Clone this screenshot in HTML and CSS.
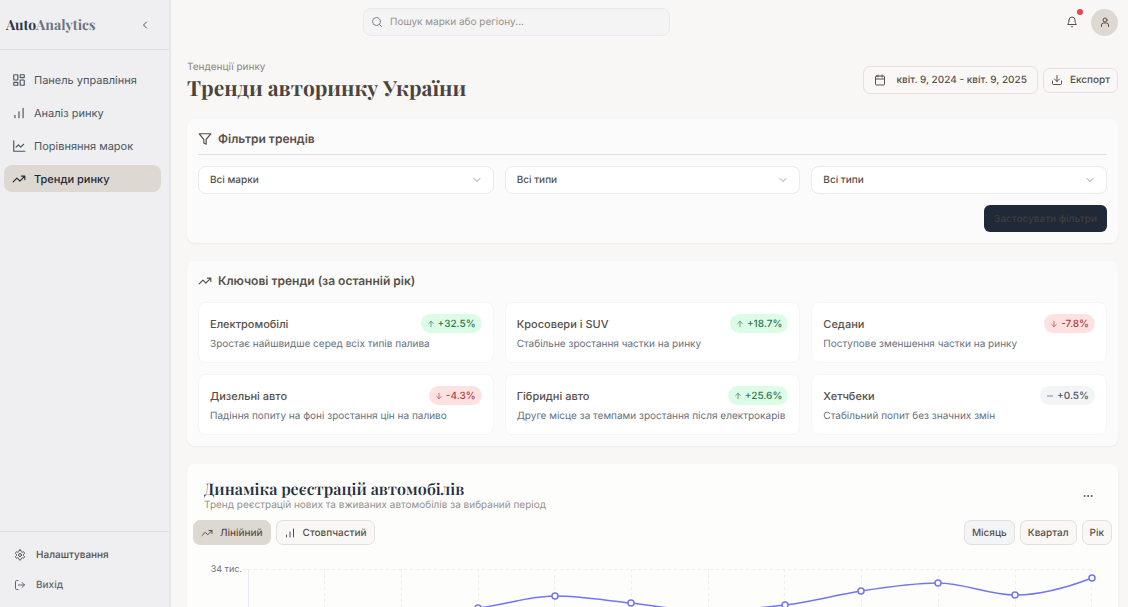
FILE: index.html
```html
<!DOCTYPE html>
<html lang="uk">
<head>
<meta charset="utf-8">
<meta name="viewport" content="width=device-width, initial-scale=1">
<title>AutoAnalytics</title>
<link rel="stylesheet" href="styles.css">
</head>
<body>
<svg class="sprite" aria-hidden="true">
  <symbol id="trend" viewBox="0 0 24 24"><path d="M2 17l6.500-6.500 5 5L22 7M16 7h6v6"/></symbol>
  <symbol id="bars" viewBox="0 0 24 24"><path d="M5 20v-4M12 20V10M19 20V4"/></symbol>
  <symbol id="chevron" viewBox="0 0 24 24"><path d="M6 9l6 6 6-6"/></symbol>
  <symbol id="up" viewBox="0 0 24 24"><path d="M12 20V4M5 11l7-7 7 7"/></symbol>
  <symbol id="down" viewBox="0 0 24 24"><path d="M12 4v16M5 13l7 7 7-7"/></symbol>
</svg>
<div class="app">
  <aside class="sidebar">
    <div class="brand">
      <a class="logo" href="#">Auto<span>Analytics</span></a>
      <button class="plain" aria-label="Згорнути меню"><svg class="icon small" viewBox="0 0 24 24"><path d="M15 18l-6-6 6-6"/></svg></button>
    </div>
    <nav class="nav">
      <a href="#"><svg class="icon" viewBox="0 0 24 24"><rect x="3" y="3" width="7" height="9" rx="1"/><rect x="14" y="3" width="7" height="5" rx="1"/><rect x="14" y="12" width="7" height="9" rx="1"/><rect x="3" y="16" width="7" height="5" rx="1"/></svg>Панель управління</a>
      <a href="#"><svg class="icon"><use href="#bars"/></svg>Аналіз ринку</a>
      <a href="#"><svg class="icon" viewBox="0 0 24 24"><path d="M3 3v18h19M7 14l4-4 4 4 5-5"/></svg>Порівняння марок</a>
      <a href="#" class="active" aria-current="page"><svg class="icon"><use href="#trend"/></svg>Тренди ринку</a>
    </nav>
    <div class="side-foot">
      <a href="#"><svg class="icon small" viewBox="0 0 24 24"><path d="M12.220 2h-.44a2 2 0 0 0-2 2v.18a2 2 0 0 1-1 1.730l-.43.25a2 2 0 0 1-2 0l-.15-.08a2 2 0 0 0-2.730.73l-.22.38a2 2 0 0 0 .73 2.730l.15.1a2 2 0 0 1 1 1.720v.51a2 2 0 0 1-1 1.740l-.15.09a2 2 0 0 0-.73 2.730l.22.38a2 2 0 0 0 2.730.73l.15-.08a2 2 0 0 1 2 0l.43.25a2 2 0 0 1 1 1.730V20a2 2 0 0 0 2 2h.44a2 2 0 0 0 2-2v-.18a2 2 0 0 1 1-1.730l.43-.25a2 2 0 0 1 2 0l.15.08a2 2 0 0 0 2.730-.73l.22-.39a2 2 0 0 0-.73-2.730l-.15-.08a2 2 0 0 1-1-1.740v-.5a2 2 0 0 1 1-1.740l.15-.09a2 2 0 0 0 .73-2.730l-.22-.38a2 2 0 0 0-2.730-.73l-.15.08a2 2 0 0 1-2 0l-.43-.25a2 2 0 0 1-1-1.730V4a2 2 0 0 0-2-2z"/><circle cx="12" cy="12" r="3"/></svg>Налаштування</a>
      <a href="#" class="exit"><svg class="icon small" viewBox="0 0 24 24"><path d="M8 3H5a2 2 0 0 0-2 2v14a2 2 0 0 0 2 2h3M16 17l5-5-5-5M21 12H9"/></svg>Вихід</a>
    </div>
  </aside>

  <div class="main">
    <header class="topbar">
      <label class="search">
        <svg class="icon small" viewBox="0 0 24 24"><circle cx="11" cy="11" r="8"/><path d="M21 21l-4.300-4.300"/></svg>
        <input type="search" placeholder="Пошук марки або регіону..." aria-label="Пошук">
      </label>
      <div class="user">
        <button class="plain bell" aria-label="Сповіщення"><svg class="icon small" viewBox="0 0 24 24"><path d="M6 8a6 6 0 0 1 12 0c0 7 3 9 3 9H3s3-2 3-9M10.300 21a1.940 1.940 0 0 0 3.400 0"/></svg><span class="dot"></span></button>
        <button class="avatar" aria-label="Профіль"><svg class="icon small" viewBox="0 0 24 24"><circle cx="12" cy="8" r="4"/><path d="M5 21v-3a4 4 0 0 1 4-4h6a4 4 0 0 1 4 4v3"/></svg></button>
      </div>
    </header>

    <main class="content">
      <div class="page-head">
        <div>
          <p class="crumb">Тенденції ринку</p>
          <h1>Тренди авторинку України</h1>
        </div>
        <div class="actions">
          <button class="btn date"><svg class="icon small" viewBox="0 0 24 24"><rect x="3" y="4" width="18" height="18" rx="2"/><path d="M8 2v4M16 2v4M3 10h18"/></svg>квіт. 9, 2024 - квіт. 9, 2025</button>
          <button class="btn"><svg class="icon small" viewBox="0 0 24 24"><path d="M21 14v5a2 2 0 0 1-2 2H5a2 2 0 0 1-2-2v-5M7 10l5 5 5-5M12 15V3"/></svg>Експорт</button>
        </div>
      </div>

      <section class="card">
        <h2 class="ruled"><svg class="icon" viewBox="0 0 24 24"><path d="M22 3H2l8 9.460V19l4 2v-8.540z"/></svg>Фільтри трендів</h2>
        <div class="grid">
          <div class="pick"><select aria-label="Марка"><option>Всі марки</option></select><svg class="icon small"><use href="#chevron"/></svg></div>
          <div class="pick"><select aria-label="Тип кузова"><option>Всі типи</option></select><svg class="icon small"><use href="#chevron"/></svg></div>
          <div class="pick"><select aria-label="Тип палива"><option>Всі типи</option></select><svg class="icon small"><use href="#chevron"/></svg></div>
        </div>
        <div class="apply-row"><button class="apply">Застосувати фільтри</button></div>
      </section>

      <section class="card">
        <h2><svg class="icon"><use href="#trend"/></svg>Ключові тренди (за останній рік)</h2>
        <div class="grid">
          <article class="tile"><div><h3>Електромобілі</h3><span class="badge up"><svg class="icon tiny"><use href="#up"/></svg>+32.5%</span></div><p>Зростає найшвидше серед всіх типів палива</p></article>
          <article class="tile"><div><h3>Кросовери і SUV</h3><span class="badge up"><svg class="icon tiny"><use href="#up"/></svg>+18.7%</span></div><p>Стабільне зростання частки на ринку</p></article>
          <article class="tile"><div><h3>Седани</h3><span class="badge down"><svg class="icon tiny"><use href="#down"/></svg>-7.8%</span></div><p>Поступове зменшення частки на ринку</p></article>
          <article class="tile"><div><h3>Дизельні авто</h3><span class="badge down"><svg class="icon tiny"><use href="#down"/></svg>-4.3%</span></div><p>Падіння попиту на фоні зростання цін на паливо</p></article>
          <article class="tile"><div><h3>Гібридні авто</h3><span class="badge up"><svg class="icon tiny"><use href="#up"/></svg>+25.6%</span></div><p>Друге місце за темпами зростання після електрокарів</p></article>
          <article class="tile"><div><h3>Хетчбеки</h3><span class="badge flat"><svg class="icon tiny" viewBox="0 0 24 24"><path d="M4 12h16"/></svg>+0.5%</span></div><p>Стабільний попит без значних змін</p></article>
        </div>
      </section>

      <section class="card chart-card">
        <div class="chart-head">
          <div>
            <h2 class="chart-title">Динаміка реєстрацій автомобілів</h2>
            <p>Тренд реєстрацій нових та вживаних автомобілів за вибраний період</p>
          </div>
          <button class="plain" aria-label="Більше"><svg class="icon small" viewBox="0 0 24 24"><circle cx="5" cy="12" r="1"/><circle cx="12" cy="12" r="1"/><circle cx="19" cy="12" r="1"/></svg></button>
        </div>
        <div class="chart-tools">
          <div>
            <button class="btn on"><svg class="icon small"><use href="#trend"/></svg>Лінійний</button>
            <button class="btn"><svg class="icon small"><use href="#bars"/></svg>Стовпчастий</button>
          </div>
          <div>
            <button class="btn period">Місяць</button>
            <button class="btn">Квартал</button>
            <button class="btn">Рік</button>
          </div>
        </div>
        <svg class="chart" viewBox="0 0 919 220" role="img" aria-label="Динаміка реєстрацій">
          <text x="49" y="15" text-anchor="end">34 тис.</text>
          <path class="gridline" d="M55 12.500H899M55.500 12V200M131.500 12V200M208.500 12V200M285.500 12V200M361.500 12V200M438.500 12V200M515.500 12V200M591.500 12V200M668.500 12V200M745.500 12V200M822.500 12V200M898.500 12V200"/>
          <path class="axis" d="M50 12.500H55.500V200H899"/>
          <path class="line" d="M55 85C81 84 106 79 132 75S183 65 208 62S259 54 285 51C311 48 336 39 362 39C387 39 413 43.500 438 46C464 49 489 54 515 54C541 54 566 51 592 48C617 45 643 38 668 34C694 30 720 26 745 26C771 26 796 38 822 38C848 38 873 31 899 21"/>
          <g class="points"><circle cx="55" cy="85" r="3"/><circle cx="132" cy="75" r="3"/><circle cx="208" cy="62" r="3"/><circle cx="285" cy="51" r="3"/><circle cx="362" cy="39" r="3"/><circle cx="438" cy="46" r="3"/><circle cx="515" cy="54" r="3"/><circle cx="592" cy="48" r="3"/><circle cx="668" cy="34" r="3"/><circle cx="745" cy="26" r="3"/><circle cx="822" cy="38" r="3"/><circle cx="899" cy="21" r="3"/></g>
        </svg>
      </section>
    </main>
  </div>
</div>
</body>
</html>
```
FILE: styles.css
```css
* { box-sizing: border-box; }
body, h1, h2, h3, p { margin: 0; }
body { font: 10px/16px Inter, sans-serif; color: #57504a; background: #f8f7f5; text-rendering: geometricPrecision; }
button, input, select { font: inherit; color: inherit; text-rendering: inherit; }
button { cursor: pointer; }
a { color: inherit; text-decoration: none; }
.sprite { position: absolute; width: 0; height: 0; }
.icon { width: 14px; height: 14px; flex: none; fill: none; stroke: currentColor; stroke-width: 2; stroke-linecap: round; stroke-linejoin: round; }
.icon.small { width: 12px; height: 12px; }
.icon.tiny { width: 8px; height: 8px; }
.plain { display: flex; padding: 4px; border: 0; background: none; }

.app { display: flex; height: 100vh; }
.sidebar { display: flex; flex-direction: column; flex: none; width: 171px; background: #efeff1; border-right: 2px solid #e7e7e9; }
.brand { display: flex; align-items: center; justify-content: space-between; height: 50px; padding: 0 14px 0 6px; border-bottom: 1px solid #dedee0; }
.logo { font: bold 14px/20px "Playfair Display", "Liberation Serif", serif; color: #2c3748; }
.logo span { color: #6b7380; }
.nav { display: grid; gap: 6px; padding: 16px 8px 0 4px; }
.nav a { display: flex; align-items: center; gap: 8px; height: 27px; padding: 0 8px; border-radius: 8px; font-size: 11px; color: #4b5563; }
.nav .active { background: #ddd8d1; color: #1f2937; font-weight: 500; }
.side-foot { display: grid; gap: 14px; margin-top: auto; padding: 15px 14px 14px; border-top: 1px solid #dedee0; font-weight: 500; }
.side-foot a { display: flex; align-items: center; gap: 10px; }
.exit { color: #5d6675; }

.main { flex: 1; min-width: 0; overflow-y: auto; scrollbar-width: none; }
.topbar { display: grid; grid-template-columns: 3fr 307px 7fr; align-items: center; padding: 8px 10px 8px 0; }
.search { grid-column: 2; display: flex; align-items: center; gap: 7px; height: 28px; padding: 0 7px; border: 1px solid #e8e9ed; border-radius: 8px; background: #f4f4f4; color: #7b8290; }
.search input { flex: 1; min-width: 0; padding: 0; border: 0; outline: 0; background: none; }
.search input::placeholder { color: #96918c; opacity: 1; }
.user { display: flex; align-items: center; justify-content: flex-end; gap: 9px; }
.bell { position: relative; }
.dot { position: absolute; top: -3px; right: -1px; width: 6px; height: 6px; border-radius: 50%; background: #ef4444; }
.avatar { display: grid; place-items: center; width: 27px; height: 27px; padding: 0; border: 0; border-radius: 50%; background: #ddd8d1; }

.content { display: grid; gap: 18px; padding: 15px 10px 16px 16px; }
.page-head { display: flex; align-items: center; justify-content: space-between; }
.crumb { color: #8b8580; }
h1 { font: bold 21px/26px "Playfair Display", "Liberation Serif", serif; color: #4b443e; }
.actions { display: flex; align-items: center; gap: 5px; }
.btn { display: flex; align-items: center; gap: 7px; height: 25px; padding: 0 7px; border: 1px solid #e5dfde; border-radius: 7px; background: #f9f8f7; font-weight: 500; white-space: nowrap; }
.date { height: 28px; padding: 0 10px; gap: 10px; }
.card { padding: 11px; border-radius: 8px; background: #fbfbfb; box-shadow: 0 1px 2px #0000000d; }
h2 { display: flex; align-items: center; gap: 6px; padding-bottom: 12px; font-size: 12px; line-height: 18px; font-weight: 600; }
.ruled { padding-bottom: 6px; margin-bottom: 11px; border-bottom: 1px solid #e4dedd; }
.grid { display: grid; grid-template-columns: repeat(3, minmax(0, 1fr)); gap: 11px; }
.pick { display: grid; align-items: center; }
.pick > * { grid-area: 1 / 1; }
.pick select { appearance: none; width: 100%; height: 28px; padding: 0 11px; border: 1px solid #ebebec; border-radius: 8px; background: #fff; font-weight: 500; }
.pick .icon { justify-self: end; margin-right: 11px; color: #a19d9a; pointer-events: none; }
.apply-row { display: flex; justify-content: flex-end; padding-top: 11px; }
.apply { height: 27px; padding: 0 10px; border: 0; border-radius: 6px; background: #1f2937; color: #443d3a; font-weight: 500; }
.tile { padding: 11px; border: 1px solid #f6f6f7; border-radius: 8px; background: #fff; }
.tile > div { display: flex; align-items: center; justify-content: space-between; }
.tile h3 { font-size: 11px; font-weight: 500; }
.tile p { padding-top: 4px; line-height: 14px; color: #667080; }
.badge { display: flex; align-items: center; gap: 3px; height: 19px; padding: 0 6px; border-radius: 10px; font-weight: 500; }
.up { background: #dcfce7; color: #2f7650; }
.down { background: #fee2e2; color: #b43a3a; }
.flat { background: #f3f4f6; color: #4b5563; }

.chart-card { padding: 17px 6px; background: #fdfdfc; }
.chart-head { display: flex; align-items: center; justify-content: space-between; padding: 0 14px 0 11px; }
.chart-title { padding: 0; font: 600 16px/18px "Playfair Display", "Liberation Serif", serif; color: #27303f; }
.chart-head p { color: #96918c; line-height: 12px; }
.chart-tools, .chart-tools > div { display: flex; justify-content: space-between; gap: 5px; }
.chart-tools { padding: 9px 0 12px; }
.btn.on { background: #ddd8d1; border-color: #ddd8d1; }
.btn.period { background: #f3f4f6; }
.chart { display: block; width: 100%; height: auto; }
.chart text { font-size: 9px; fill: #6b7280; }
.gridline { fill: none; stroke: #eeeef1; stroke-dasharray: 3 3; }
.axis { fill: none; stroke: #eaeaf3; }
.line { fill: none; stroke: #7475f2; stroke-width: 1.500; }
.points { fill: #fff; stroke: #7475f2; stroke-width: 1.500; }
```
